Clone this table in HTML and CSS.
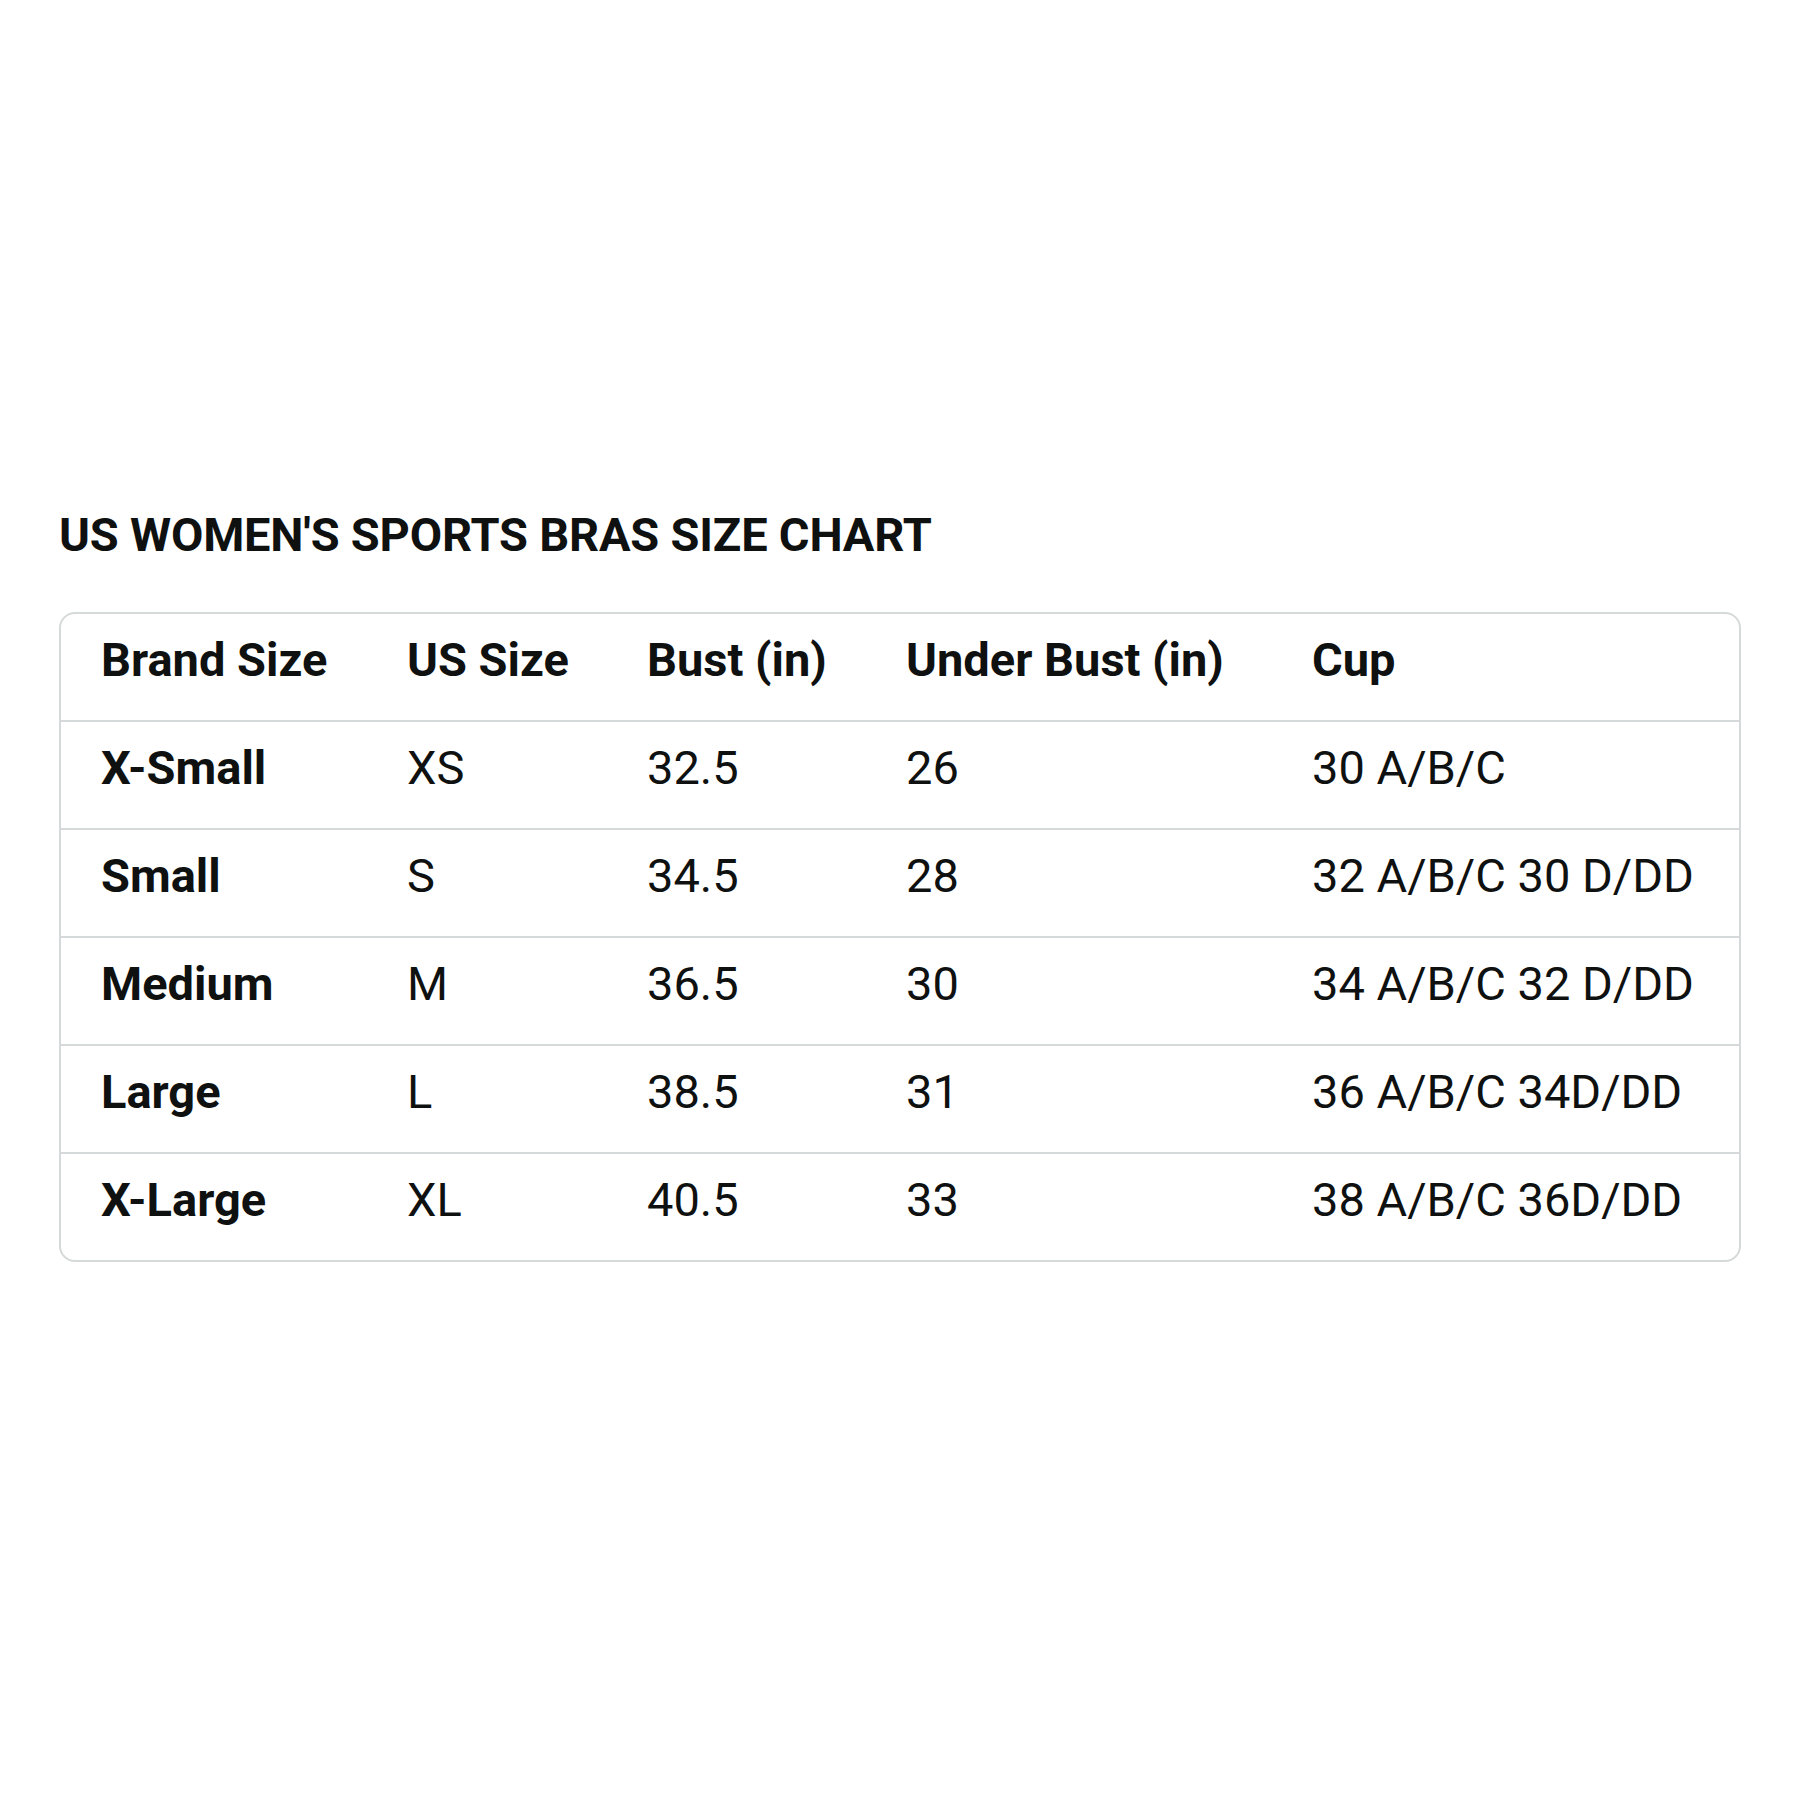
FILE: index.html
```html
<!DOCTYPE html>
<html lang="en">
<head>
<meta charset="utf-8">
<title>US Women's Sports Bras Size Chart</title>
<link rel="stylesheet" href="styles.css">
</head>
<body>
<main class="page">
  <h2 class="title">US WOMEN'S SPORTS BRAS SIZE CHART</h2>
  <div class="chart">
    <table class="size-table">
      <colgroup>
        <col class="c-brand">
        <col class="c-us">
        <col class="c-bust">
        <col class="c-under">
        <col class="c-cup">
      </colgroup>
      <thead>
        <tr>
          <th>Brand Size</th>
          <th>US Size</th>
          <th>Bust (in)</th>
          <th>Under Bust (in)</th>
          <th>Cup</th>
        </tr>
      </thead>
      <tbody>
        <tr><th>X-Small</th><td>XS</td><td>32.5</td><td>26</td><td>30 A/B/C</td></tr>
        <tr><th>Small</th><td>S</td><td>34.5</td><td>28</td><td>32 A/B/C 30 D/DD</td></tr>
        <tr><th>Medium</th><td>M</td><td>36.5</td><td>30</td><td>34 A/B/C 32 D/DD</td></tr>
        <tr><th>Large</th><td>L</td><td>38.5</td><td>31</td><td>36 A/B/C 34D/DD</td></tr>
        <tr><th>X-Large</th><td>XL</td><td>40.5</td><td>33</td><td>38 A/B/C 36D/DD</td></tr>
      </tbody>
    </table>
  </div>
</main>
</body>
</html>
```
FILE: styles.css
```css
html, body {
  margin: 0;
  padding: 0;
  background: #ffffff;
}

body {
  font-family: Roboto, "Noto Sans", "Liberation Sans", sans-serif;
  color: #0f1111;
}

.page {
  padding: 507px 60px 0 59px;
}

.title {
  margin: 0 0 49px 0;
  font-size: 47px;
  line-height: 56px;
  font-weight: 700;
  letter-spacing: -0.2px;
}

.chart {
  width: 1678px;
  border: 2px solid #d5d9d9;
  border-radius: 16px;
  overflow: hidden;
}

.size-table {
  width: 100%;
  border-collapse: separate;
  border-spacing: 0;
  table-layout: fixed;
  font-size: 47px;
  line-height: 56px;
}

.c-brand { width: 306px; }
.c-us { width: 240px; }
.c-bust { width: 259px; }
.c-under { width: 406px; }
.c-cup { width: 467px; }

.size-table th,
.size-table td {
  height: 106px;
  padding: 0 0 14px 40px;
  text-align: left;
  vertical-align: middle;
  white-space: nowrap;
  box-sizing: border-box;
}

.size-table th {
  font-weight: 700;
}

.size-table td {
  font-weight: 400;
}

.size-table tbody th,
.size-table tbody td {
  border-top: 2px solid #d5d9d9;
  height: 108px;
}
```
